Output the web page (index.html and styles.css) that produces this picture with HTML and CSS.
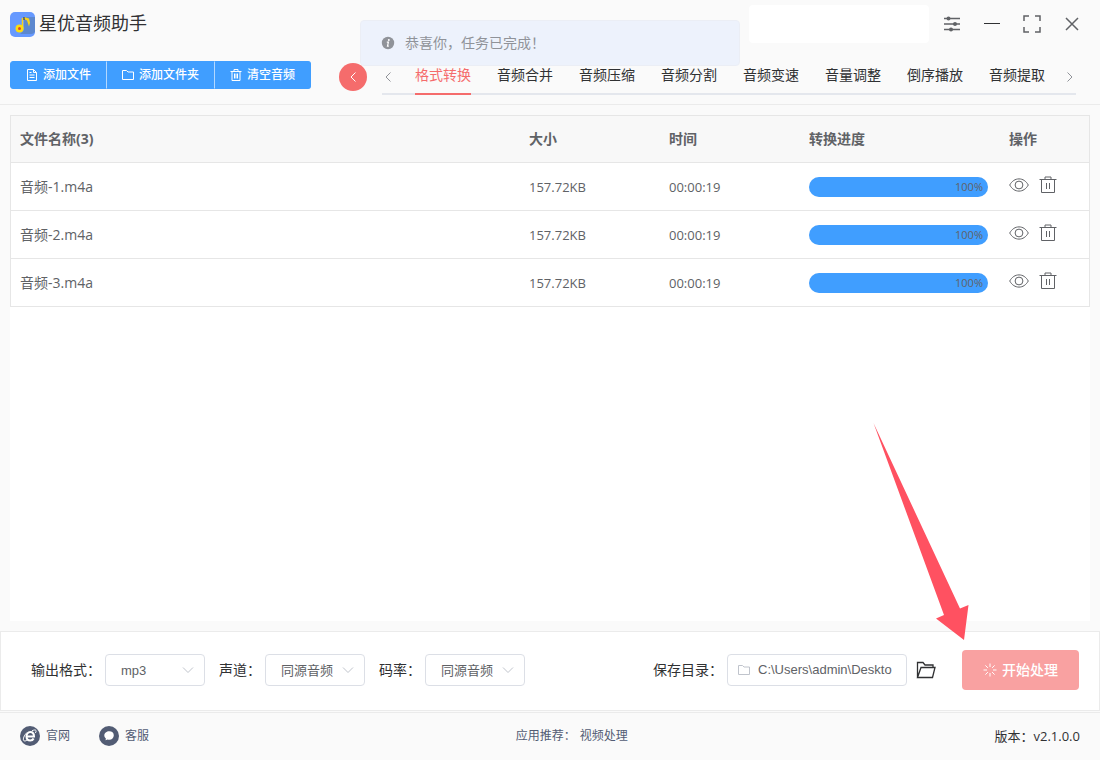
FILE: index.html
```html
<!DOCTYPE html>
<html lang="zh-CN">
<head>
    <meta charset="UTF-8">
    <meta name="viewport" content="width=device-width, initial-scale=1.0">
    <title>星优音频助手</title>
    <link rel="stylesheet" href="styles.css">
</head>
<body>
    <!-- shared icons -->
    <svg class="sprite" aria-hidden="true">
        <symbol id="i-eye" viewBox="0 0 20 20"><path d="M.7 10C3 6 6.200 3.900 10 3.900S17 6 19.300 10C17 14 13.800 16.100 10 16.100S3 14 .7 10Z"/><circle cx="10" cy="10" r="3.900"/></symbol>
        <symbol id="i-trash" viewBox="0 0 18 20"><path d="M.5 4.500h17M6 4.500v-2.500h6v2.500M2.500 4.500v13h13v-13M7.500 8v6M10.500 8v6"/></symbol>
        <symbol id="i-left" viewBox="0 0 12 12"><path d="M8.500 1.500 4 6l4.500 4.500"/></symbol>
        <symbol id="i-right" viewBox="0 0 12 12"><path d="M3.500 1.500 8 6l-4.500 4.500"/></symbol>
        <symbol id="i-down" viewBox="0 0 12 12"><path d="M1 3.500l5 5 5-5"/></symbol>
        <symbol id="i-folder" viewBox="0 0 12 12"><path d="M.5 1.500h4l1.500 1.500h5.500v7.500h-11z"/></symbol>
    </svg>

    <header class="header">
        <div class="titlebar">
            <svg class="logo" viewBox="0 0 25 25">
                <rect width="25" height="25" rx="5" fill="#6699ff"/>
                <path d="M14 5h11v15a5 5 0 0 1-5 2H10l4-4z" fill="#5c88cf"/>
                <path d="M12.500 17V6" stroke="#f7d31c" stroke-width="1.500" fill="none"/>
                <path d="M14 5v2l3 1.500 2 6 1-4-1-4z" fill="#f7d31c"/>
                <circle cx="9.500" cy="16.500" r="4" fill="#fddc10"/>
                <circle cx="9.500" cy="16.500" r="1.500" fill="#e0432e"/>
                <path d="M14 5v3" stroke="#333" stroke-width="1"/>
            </svg>
            <h1 class="app-name">星优音频助手</h1>
            <div class="account"></div>
            <div class="window-controls">
                <button type="button" class="win-btn" aria-label="设置"><svg class="icon-16" viewBox="0 0 16 16"><path d="M0 2.500h16M0 8h16M0 13.500h16"/><g class="dots"><circle cx="4.500" cy="2.500" r="2"/><circle cx="11" cy="8" r="2"/><circle cx="7" cy="13.500" r="2"/></g></svg></button>
                <button type="button" class="win-btn dark" aria-label="最小化"><svg class="icon-16" viewBox="0 0 16 16"><path d="M0 7.500h16"/></svg></button>
                <button type="button" class="win-btn" aria-label="最大化"><svg class="icon-18" viewBox="0 0 18 18"><path d="M1 6V1h5M12 1h5v5M17 12v5h-5M6 17H1v-5"/></svg></button>
                <button type="button" class="win-btn" aria-label="关闭"><svg class="icon-16" viewBox="0 0 16 16"><path d="M2 2l12 12M14 2 2 14"/></svg></button>
            </div>
        </div>

        <div class="toolbar">
            <div class="btn-group">
                <button type="button" class="btn"><svg class="icon-12" viewBox="0 0 12 12"><path d="M1.500.5h6l3 3v8h-9zM7.500.5v3h3M3.500 3.500h2M3.500 6h5M3.500 8.500h5"/></svg>添加文件</button>
                <button type="button" class="btn"><svg class="icon-12"><use href="#i-folder"/></svg>添加文件夹</button>
                <button type="button" class="btn"><svg class="icon-12" viewBox="0 0 12 12"><path d="M.5 2.500h11M4 2.500v-2h4v2M2 2.500v9h8v-9M4.500 4.500v5M6 4.500v5M7.500 4.500v5"/></svg>清空音频</button>
            </div>
            <button type="button" class="back-btn" aria-label="返回"><svg class="icon-12"><use href="#i-left"/></svg></button>
            <nav class="tabs">
                <button type="button" class="tab-arrow" aria-label="向左"><svg class="icon-12"><use href="#i-left"/></svg></button>
                <div class="tab-list">
                    <a href="#" class="tab active">格式转换</a>
                    <a href="#" class="tab">音频合并</a>
                    <a href="#" class="tab">音频压缩</a>
                    <a href="#" class="tab">音频分割</a>
                    <a href="#" class="tab">音频变速</a>
                    <a href="#" class="tab">音量调整</a>
                    <a href="#" class="tab">倒序播放</a>
                    <a href="#" class="tab">音频提取</a>
                </div>
                <button type="button" class="tab-arrow" aria-label="向右"><svg class="icon-12"><use href="#i-right"/></svg></button>
            </nav>
        </div>
    </header>

    <main class="content">
        <table class="file-table">
            <colgroup>
                <col>
                <col class="col-size">
                <col class="col-time">
                <col class="col-progress">
                <col class="col-action">
            </colgroup>
            <thead>
                <tr><th>文件名称(3)</th><th>大小</th><th>时间</th><th>转换进度</th><th>操作</th></tr>
            </thead>
            <tbody>
                <tr>
                    <td>音频-1.m4a</td>
                    <td class="num">157.72KB</td>
                    <td class="num">00:00:19</td>
                    <td><div class="progress"><div class="progress-bar" style="width: 100%">100%</div></div></td>
                    <td><div class="actions"><button type="button" aria-label="预览"><svg class="icon-20"><use href="#i-eye"/></svg></button><button type="button" aria-label="删除"><svg class="icon-trash"><use href="#i-trash"/></svg></button></div></td>
                </tr>
                <tr>
                    <td>音频-2.m4a</td>
                    <td class="num">157.72KB</td>
                    <td class="num">00:00:19</td>
                    <td><div class="progress"><div class="progress-bar" style="width: 100%">100%</div></div></td>
                    <td><div class="actions"><button type="button" aria-label="预览"><svg class="icon-20"><use href="#i-eye"/></svg></button><button type="button" aria-label="删除"><svg class="icon-trash"><use href="#i-trash"/></svg></button></div></td>
                </tr>
                <tr>
                    <td>音频-3.m4a</td>
                    <td class="num">157.72KB</td>
                    <td class="num">00:00:19</td>
                    <td><div class="progress"><div class="progress-bar" style="width: 100%">100%</div></div></td>
                    <td><div class="actions"><button type="button" aria-label="预览"><svg class="icon-20"><use href="#i-eye"/></svg></button><button type="button" aria-label="删除"><svg class="icon-trash"><use href="#i-trash"/></svg></button></div></td>
                </tr>
            </tbody>
        </table>
    </main>

    <form class="options">
        <div class="field">
            <label for="format">输出格式：</label>
            <div class="select"><select id="format"><option>mp3</option></select><svg class="icon-12"><use href="#i-down"/></svg></div>
        </div>
        <div class="field">
            <label for="channel">声道：</label>
            <div class="select"><select id="channel"><option>同源音频</option></select><svg class="icon-12"><use href="#i-down"/></svg></div>
        </div>
        <div class="field">
            <label for="bitrate">码率：</label>
            <div class="select"><select id="bitrate"><option>同源音频</option></select><svg class="icon-12"><use href="#i-down"/></svg></div>
        </div>
        <div class="field save-field">
            <label for="savePath">保存目录：</label>
            <div class="path-box"><svg class="icon-12"><use href="#i-folder"/></svg><input type="text" id="savePath" value="C:\Users\admin\Deskto"></div>
        </div>
        <button type="button" class="open-btn" aria-label="打开目录"><svg class="icon-20" viewBox="0 0 20 20"><path d="M1.500 17.500v-15h5.500l2 2.500h8v2.500M1.500 17.500l3.500-10h14l-2.500 10z"/></svg></button>
        <div class="start">
            <button type="button" class="start-btn">
                <svg class="icon-14" viewBox="0 0 14 14"><path d="M7 .5v3.500M7 10v3.500M.5 7h3.500M10 7h3.500M2.400 2.400l2.500 2.500M9.100 9.100l2.500 2.500M11.600 2.400l-2.500 2.500M4.900 9.100l-2.500 2.500"/></svg>
                开始处理
            </button>
            <svg class="arrow" viewBox="0 0 96 217" aria-hidden="true"><path d="M.5 0 87 185.500 95.500 182 91 217 63 195.500 71 192z"/></svg>
        </div>
    </form>

    <footer class="footer">
        <div class="footer-links">
            <a href="#"><svg class="icon-20" viewBox="0 0 20 20"><circle cx="10" cy="10" r="10" fill="#525c74"/><g fill="none" stroke="#fff"><path d="M6.500 10.500h7.500c0-3-1.500-4.500-3.700-4.500S6.500 8 6.500 10.500s1.500 4 3.800 4c1.600 0 2.700-.7 3.300-2" stroke-width="2"/><path d="M12 4.800c2-1 3.600-1.100 4-.3.300.6 0 1.500-.6 2.500M7 6.500c-3 3-4.300 6.600-3.300 8 .6.800 2.200.5 4-.6"/></g></svg>官网</a>
            <a href="#"><svg class="icon-20" viewBox="0 0 20 20"><circle cx="10" cy="10" r="10" fill="#525c74"/><path d="M10.300 5.300c2.600 0 4.500 1.500 4.500 3.900 0 2.500-1.900 4.500-4.500 4.500-.6 0-1.200-.1-1.700-.3l-2 .8.200-2C5.800 11.500 5.300 10.500 5.300 9.400c0-2.400 2.300-4.100 5-4.100z" fill="#fff"/></svg>客服</a>
        </div>
        <div class="recommend">应用推荐：<a href="#">视频处理</a></div>
        <div class="version">版本：v2.1.0.0</div>
    </footer>

    <div class="message" role="alert">
        <svg class="icon-14" viewBox="0 0 14 14"><circle cx="7" cy="7" r="6.200" fill="#909399"/><circle cx="7.800" cy="3.900" r="1" fill="#fff"/><path d="M5.800 6.200h1.600l-.9 4h1.300" fill="none" stroke="#fff" stroke-width="1.200"/></svg>
        <p>恭喜你，任务已完成！</p>
    </div>
</body>
</html>
```
FILE: styles.css
```css
* {
    box-sizing: border-box;
}
body {
    margin: 0;
    min-height: 100vh;
    display: flex;
    flex-direction: column;
    background-color: #fafafa;
    color: #303133;
    font-family: "Open Sans", "Noto Sans CJK SC", sans-serif;
    font-size: 14px;
    line-height: 20px;
}
button {
    padding: 0;
    border: none;
    background: none;
    color: inherit;
    font: inherit;
    cursor: pointer;
}
a {
    color: inherit;
    text-decoration: none;
}
svg {
    display: block;
    flex-shrink: 0;
    fill: none;
    stroke: currentColor;
}
.sprite {
    display: none;
}
.icon-12 {
    width: 12px;
    height: 12px;
}
.icon-14 {
    width: 14px;
    height: 14px;
}
.icon-16 {
    width: 16px;
    height: 16px;
}
.icon-18 {
    width: 18px;
    height: 18px;
}
.icon-20 {
    width: 20px;
    height: 20px;
}
.icon-trash {
    width: 18px;
    height: 20px;
}

/* header */
.header {
    border-bottom: 1px solid #ebebeb;
}
.titlebar {
    display: flex;
    align-items: center;
    height: 48px;
    padding: 0 8px 0 10px;
}
.logo {
    width: 25px;
    height: 25px;
    stroke: none;
}
.app-name {
    margin: 0 auto 0 4px;
    padding-bottom: 2px;
    font-size: 18px;
    font-weight: 400;
}
.account {
    width: 180px;
    height: 38px;
    margin-right: 3px;
    border-radius: 4px;
    background-color: white;
}
.window-controls {
    display: flex;
}
.win-btn {
    display: flex;
    align-items: center;
    justify-content: center;
    width: 40px;
    height: 32px;
    color: #606266;
}
.win-btn svg {
    stroke-width: 1.5;
}
.win-btn.dark svg {
    color: #303133;
    stroke-width: 1;
}
.dots {
    fill: currentColor;
    stroke: none;
}
.toolbar {
    display: flex;
    align-items: center;
    height: 56px;
    padding: 0 24px 0 10px;
}
.btn-group {
    display: flex;
    margin-bottom: 2px;
}
.btn {
    display: flex;
    align-items: center;
    gap: 5px;
    height: 28px;
    padding: 0 15px;
    border: 1px solid #409eff;
    background-color: #409eff;
    color: white;
    font-size: 12px;
    font-weight: 500;
}
.btn:first-child {
    border-radius: 3px 0 0 3px;
}
.btn:last-child {
    border-radius: 0 3px 3px 0;
}
.btn + .btn {
    margin-left: -1px;
    border-left-color: #b3d8ff;
}
.back-btn {
    display: flex;
    align-items: center;
    justify-content: center;
    width: 28px;
    height: 28px;
    margin: 2px 15px 0 28px;
    border-radius: 50%;
    background-color: #f56c6c;
    color: white;
}
.tabs {
    display: flex;
    flex: 1;
    justify-content: space-between;
    border-bottom: 2px solid #e4e7ed;
}
.tab-list {
    display: flex;
    gap: 26px;
    margin: 0 0 -2px 2px;
}
.tab {
    border-bottom: 2px solid transparent;
    line-height: 36px;
}
.tab.active {
    border-bottom-color: #f56c6c;
    color: #f56c6c;
}
.tab-arrow {
    padding-top: 3px;
    color: #909399;
}

/* file list */
.content {
    flex: 1;
    margin: 10px;
    background-color: white;
}
.file-table {
    width: 100%;
    table-layout: fixed;
    border-collapse: separate;
    border-spacing: 0;
    border: 1px solid #e6e6e6;
    border-bottom: none;
    color: #606266;
}
.file-table th,
.file-table td {
    height: 48px;
    padding: 0 10px;
    border-bottom: 1px solid #e6e6e6;
    text-align: left;
}
.file-table th {
    height: 47px;
    background-color: #f8f8f8;
    font-weight: 700;
}
.file-table th:first-child,
.file-table td:first-child {
    padding-left: 9px;
}
.file-table .num {
    font-size: 13px;
}
.col-size,
.col-time {
    width: 140px;
}
.col-progress {
    width: 200px;
}
.col-action {
    width: 90px;
}
.progress {
    height: 20px;
    margin-right: 1px;
    border-radius: 10px;
    background-color: #ebeef5;
}
.progress-bar {
    height: 20px;
    padding-right: 5px;
    border-radius: 10px;
    background-color: #409eff;
    font-size: 11px;
    text-align: right;
}
.actions {
    display: flex;
    gap: 10px;
    padding-bottom: 4px;
}

/* output options */
.options {
    display: flex;
    align-items: center;
    gap: 14px;
    height: 80px;
    padding: 0 20px 2px 30px;
    border: 1px solid #ebebeb;
    background-color: white;
}
.field {
    display: flex;
    align-items: center;
    gap: 4px;
}
.save-field {
    margin-left: auto;
}
.select {
    position: relative;
    width: 100px;
}
.select select,
.path-box {
    display: block;
    width: 100%;
    height: 32px;
    border: 1px solid #dcdfe6;
    border-radius: 4px;
    background-color: white;
    color: #606266;
    font-family: "Liberation Sans", "Noto Sans CJK SC", sans-serif;
    font-size: 13px;
}
.select select {
    padding: 0 15px;
    appearance: none;
}
.select svg {
    position: absolute;
    top: 10px;
    right: 11px;
    color: #c0c4cc;
    pointer-events: none;
}
.path-box {
    display: flex;
    align-items: center;
    gap: 8px;
    width: 180px;
    padding: 0 10px;
}
.path-box svg {
    color: #c0c4cc;
}
.path-box input {
    flex: 1;
    min-width: 0;
    padding: 0;
    border: none;
    outline: none;
    background: none;
    color: inherit;
    font: inherit;
}
.open-btn {
    margin: 0 12px 0 -5px;
}
.open-btn svg {
    stroke-width: 1.3;
}
.start {
    position: relative;
}
.start-btn {
    display: flex;
    align-items: center;
    gap: 5px;
    height: 40px;
    padding: 0 21px;
    border-radius: 4px;
    background-color: #f9a1a1;
    color: white;
    font-weight: 500;
}
.arrow {
    position: absolute;
    right: 110px;
    bottom: 50px;
    width: 96px;
    height: 217px;
    fill: #ff5161;
    stroke: none;
    pointer-events: none;
}

/* footer */
.footer {
    display: flex;
    align-items: center;
    justify-content: space-between;
    height: 48px;
    margin-top: 1px;
    padding: 0 20px 2px;
    border-top: 1px solid #ebebeb;
    color: #525c74;
    font-size: 12px;
}
.footer-links {
    display: flex;
    gap: 29px;
}
.footer-links a {
    display: flex;
    align-items: center;
    gap: 6px;
}
.footer-links svg {
    stroke: none;
}
.recommend {
    display: flex;
    gap: 4px;
}
.version {
    color: #303133;
    font-size: 13px;
}

/* toast */
.message {
    position: fixed;
    top: 20px;
    left: 50%;
    transform: translateX(-50%);
    display: flex;
    align-items: center;
    gap: 10px;
    width: 380px;
    height: 46px;
    padding: 0 20px;
    border: 1px solid #ebeef5;
    border-radius: 4px;
    background-color: #edf2fc;
    color: #909399;
}
.message svg {
    stroke: none;
}
.message p {
    margin: 0;
}
```
